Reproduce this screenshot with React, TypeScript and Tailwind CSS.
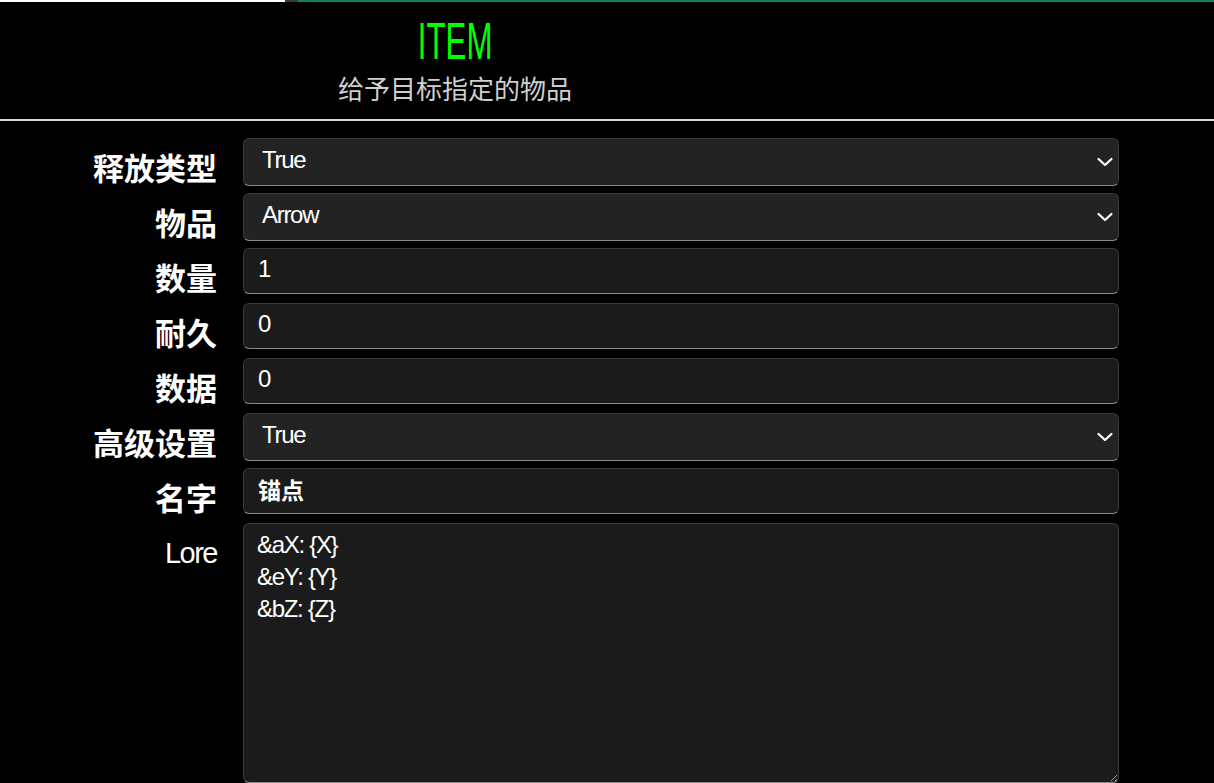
const latin = '"Liberation Sans", "Noto Sans CJK SC", sans-serif';

type Field =
  | { label: string; kind: 'select'; value: string; options: string[] }
  | { label: string; kind: 'input'; value: string; bold?: boolean };

const fields: Field[] = [
  { label: '释放类型', kind: 'select', value: 'True', options: ['True', 'False'] },
  { label: '物品', kind: 'select', value: 'Arrow', options: ['Arrow', 'Stone', 'Diamond'] },
  { label: '数量', kind: 'input', value: '1' },
  { label: '耐久', kind: 'input', value: '0' },
  { label: '数据', kind: 'input', value: '0' },
  { label: '高级设置', kind: 'select', value: 'True', options: ['True', 'False'] },
  { label: '名字', kind: 'input', value: '锚点', bold: true },
];

const Chevron = () => (
  <svg
    width="18"
    height="18"
    viewBox="0 0 18 18"
    fill="none"
    stroke="white"
    strokeWidth="2.2"
    strokeLinecap="round"
    strokeLinejoin="round"
    className="absolute right-[5px] top-[15px] pointer-events-none"
  >
    <path d="M2.5 6 L9 12 L15.5 6" />
  </svg>
);

export default function App() {
  return (
    <div className="min-h-screen bg-black text-white" style={{ fontFamily: latin }}>
      {/* progress bar */}
      <div className="flex h-[2px]">
        <div className="w-[285px] bg-white" />
        <div className="w-[13px] bg-[#3a3a3a]" />
        <div className="flex-1 bg-[#128060]" />
      </div>

      {/* header */}
      <div className="h-[117px] w-[910px] flex flex-col items-center">
        <h1 className="mt-[12px] text-[52px] leading-[54px] text-[#00ff00] scale-x-[0.6]">ITEM</h1>
        <p className="mt-[5px] text-[26px] leading-[30px] text-[#cfcfcf] font-['Noto_Sans_CJK_SC',sans-serif]">
          给予目标指定的物品
        </p>
      </div>
      <div className="h-[2px] bg-[#d8d8d8]" />

      {/* form */}
      <div className="pt-[17px] flex flex-col">
        {fields.map((f) => (
          <div key={f.label} className="flex h-[55px]">
            <label className="w-[217px] pt-[9px] text-right text-[31px] leading-[40px] font-bold font-['Noto_Sans_CJK_SC',sans-serif]">
              {f.label}
            </label>
            <div className="ml-[26px] w-[876px]">
              {f.kind === 'select' ? (
                <div className="relative">
                  <select
                    defaultValue={f.value}
                    className="appearance-none w-full h-[48px] rounded-[6px] bg-[#232323] border border-[#3a3a3a] border-b-[#8a8a8a] pl-[18px] pb-[5px] text-[24px] tracking-[-1.3px] text-white outline-none"
                    style={{ fontFamily: latin }}
                  >
                    {f.options.map((o) => (
                      <option key={o}>{o}</option>
                    ))}
                  </select>
                  <Chevron />
                </div>
              ) : (
                <input
                  defaultValue={f.value}
                  className={`w-full h-[46px] rounded-[6px] bg-[#1b1b1b] border border-[#3a3a3a] border-b-[#8a8a8a] pl-[14px] pb-[5px] text-white outline-none ${f.bold ? "text-[23px] font-bold font-['Noto_Sans_CJK_SC',sans-serif]" : 'text-[24px] tracking-[-1.3px]'}`}
                  style={f.bold ? undefined : { fontFamily: latin }}
                />
              )}
            </div>
          </div>
        ))}
        <div className="flex">
          <label className="w-[217px] pt-[12px] text-right text-[29px] leading-[36px] tracking-[-1.5px]">Lore</label>
          <div className="ml-[26px] w-[876px]">
            <textarea
              defaultValue={'&aX: {X}\n&eY: {Y}\n&bZ: {Z}'}
              className="block w-full h-[260px] rounded-[6px] bg-[#1b1b1b] border border-[#3a3a3a] border-b-[#8a8a8a] px-[13px] pt-[5px] text-[24px] leading-[32px] tracking-[-1.3px] text-white outline-none"
              style={{ fontFamily: latin }}
            />
          </div>
        </div>
      </div>
    </div>
  );
}
